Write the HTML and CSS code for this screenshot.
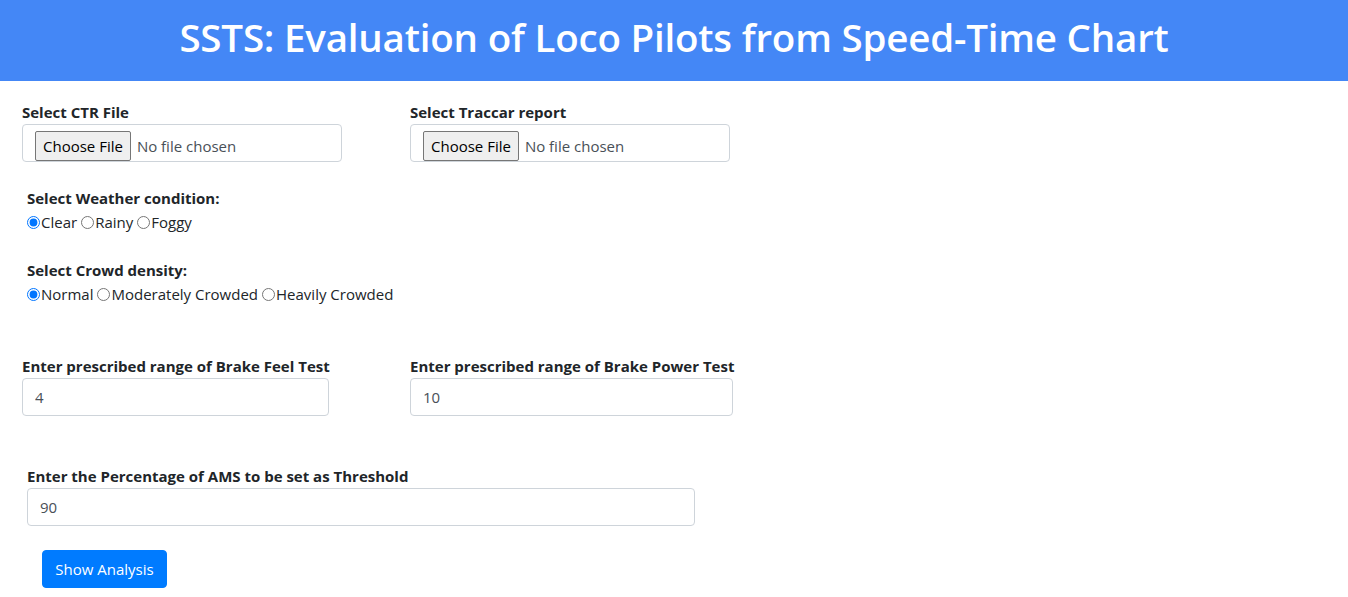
FILE: index.html
```html
<!DOCTYPE html>
<html>
<head>
<meta charset="utf-8">
<link rel="stylesheet" href="styles.css">
</head>
<body>
<header class="banner"><h1 class="title">SSTS: Evaluation of Loco Pilots from Speed-Time Chart</h1></header>
<main class="page">
  <div class="row row-files">
    <div class="field f-ctr">
      <label class="lbl">Select CTR File</label>
      <div class="file-box"><span class="file-btn">Choose File</span><span class="file-none">No file chosen</span></div>
    </div>
    <div class="field f-trac">
      <label class="lbl">Select Traccar report</label>
      <div class="file-box"><span class="file-btn">Choose File</span><span class="file-none">No file chosen</span></div>
    </div>
  </div>
  <div class="group g-weather">
    <div class="lbl">Select Weather condition:</div>
    <div class="radios">
      <label class="opt"><input type="radio" name="w" checked>Clear</label>
      <label class="opt"><input type="radio" name="w">Rainy</label>
      <label class="opt"><input type="radio" name="w">Foggy</label>
    </div>
  </div>
  <div class="group g-crowd">
    <div class="lbl">Select Crowd density:</div>
    <div class="radios">
      <label class="opt"><input type="radio" name="c" checked>Normal</label>
      <label class="opt"><input type="radio" name="c">Moderately Crowded</label>
      <label class="opt"><input type="radio" name="c">Heavily Crowded</label>
    </div>
  </div>
  <div class="row row-brake">
    <div class="field f-feel">
      <label class="lbl">Enter prescribed range of Brake Feel Test</label>
      <input class="txt" type="text" value="4">
    </div>
    <div class="field f-power">
      <label class="lbl">Enter prescribed range of Brake Power Test</label>
      <input class="txt" type="text" value="10">
    </div>
  </div>
  <div class="group g-ams">
    <label class="lbl">Enter the Percentage of AMS to be set as Threshold</label>
    <input class="txt ams" type="text" value="90">
  </div>
  <div class="actions"><button class="btn">Show Analysis</button></div>
</main>
</body>
</html>
```
FILE: styles.css
```css
* { box-sizing: border-box; }
body {
  margin: 0;
  font-family: "Open Sans", "Noto Sans", sans-serif;
  color: #212529;
  background: #fff;
}
.banner {
  background: #4487f6;
  height: 81px;
  display: flex;
  align-items: center;
  justify-content: center;
  padding-bottom: 6px;
}
.title {
  margin: 0;
  color: #fff;
  font-size: 38.5px;
  font-weight: 600;
  letter-spacing: -0.2px;
  line-height: 1.2;
}
.page {
  display: flex;
  flex-direction: column;
  padding: 0 0 0 22px;
}
.row { display: flex; }
.row-files { margin-top: 20px; }
.field { display: flex; flex-direction: column; }
.f-ctr { width: 320px; margin-right: 68px; }
.f-trac { width: 320px; }
.lbl {
  font-weight: 700;
  font-size: 15px;
  line-height: 23px;
  display: block;
  white-space: nowrap;
}
.file-box {
  height: 38px;
  border: 1px solid #ced4da;
  border-radius: 4px;
  display: flex;
  align-items: flex-end;
  padding: 0 0 0 12px;
  font-size: 15px;
}
.file-btn {
  border: 1px solid #767676;
  background: #efefef;
  border-radius: 2px;
  height: 30px;
  line-height: 28px;
  padding: 0 7px;
  color: #000;
  margin-right: 6px;
}
.file-none { color: #495057; line-height: 28px; padding-bottom: 1px; }
.group { display: flex; flex-direction: column; padding-left: 5px; }
.g-weather { margin-top: 24px; }
.g-crowd { margin-top: 24px; }
.g-weather .lbl, .g-crowd .lbl { line-height: 24px; }
.radios { display: flex; font-size: 15px; line-height: 24px; color: #212529; }
.opt { display: flex; align-items: center; margin-right: 4px; }
.opt input { margin: 0 1px 0 0; width: 13px; height: 13px; accent-color: #0075ff; }
.row-brake { margin-top: 49px; }
.f-feel { width: 307px; margin-right: 81px; }
.f-power { width: 323px; }
.txt {
  height: 38px;
  border: 1px solid #ced4da;
  border-radius: 4px;
  padding: 6px 12px;
  font-family: inherit;
  font-size: 15px;
  color: #495057;
  width: 100%;
}
.g-ams { margin-top: 49px; }
.ams { width: 668px; }
.actions { margin-top: 24px; padding-left: 20px; }
.btn {
  background: #007bff;
  color: #fff;
  border: 1px solid #007bff;
  border-radius: 4px;
  height: 38px;
  padding: 0 12px;
  font-family: inherit;
  font-size: 15px;
  width: 125px;
}
```
